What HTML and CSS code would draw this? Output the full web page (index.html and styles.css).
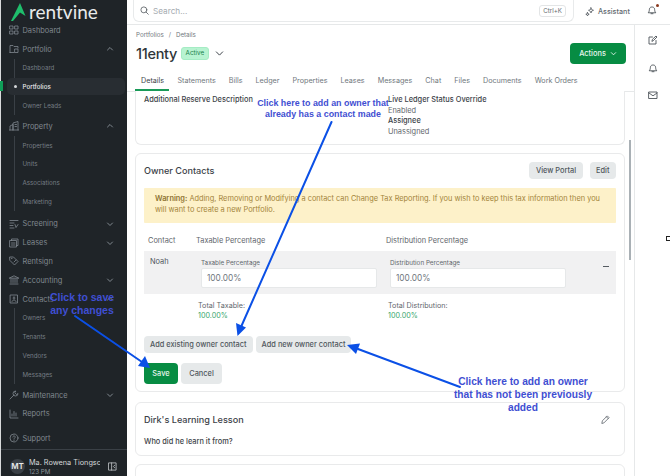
FILE: index.html
```html
<!DOCTYPE html>
<html lang="en">
<head>
    <meta charset="UTF-8">
    <title>Rentvine - 11enty</title>
    <link rel="stylesheet" href="styles.css">
</head>
<body>
    <!-- Sidebar -->
    <aside class="sidebar">
        <div class="logo">
            <svg class="logo-mark" viewBox="0 0 15 18"><path d="M9 0 14.500 13 9 9.500 2 18 0 18Z" fill="#1fbe6c"/></svg>
            <span>rentvine</span>
        </div>
        <nav class="side-nav">
            <a class="nav-item"><svg class="nav-icon" viewBox="0 0 10 10"><path d="M1 1h3v3H1zM6 1h3v3H6zM1 6h3v3H1zM6 6h3v3H6z"/></svg>Dashboard</a>
            <a class="nav-item"><svg class="nav-icon" viewBox="0 0 10 10"><path d="M1 8.500V1.500h3l1 1h4v1.500M1 8.500h4M6 5h3v3.500H6z"/></svg>Portfolio<svg class="chev" viewBox="0 0 8 8"><path d="M1.500 5 4 2.500 6.500 5"/></svg></a>
            <div class="sub-list">
                <a class="sub-item">Dashboard</a>
                <a class="sub-item active">Portfolios</a>
                <a class="sub-item">Owner Leads</a>
            </div>
            <a class="nav-item"><svg class="nav-icon" viewBox="0 0 10 10"><path d="M1 9V5l3-1.500V9M4 9V2l5-1.500V9M.5 9h9M6 3.500h1.500M6 5.500h1.500"/></svg>Property<svg class="chev" viewBox="0 0 8 8"><path d="M1.500 5 4 2.500 6.500 5"/></svg></a>
            <div class="sub-list sub-list-property">
                <a class="sub-item">Properties</a>
                <a class="sub-item">Units</a>
                <a class="sub-item">Associations</a>
                <a class="sub-item">Marketing</a>
            </div>
            <a class="nav-item"><svg class="nav-icon" viewBox="0 0 10 10"><path d="M1 1.500h8M1 4h4M1 6.500h3M1 9h4M6 5.500l1 3 2-3"/></svg>Screening<svg class="chev" viewBox="0 0 8 8"><path d="M1.500 3 4 5.500 6.500 3"/></svg></a>
            <a class="nav-item"><svg class="nav-icon" viewBox="0 0 10 10"><path d="M2.500 2.500V1h6.500v6.500H7.500M1 2.500h6.500V9H1zM2.500 5h3.500M2.500 7h3.500"/></svg>Leases<svg class="chev" viewBox="0 0 8 8"><path d="M1.500 3 4 5.500 6.500 3"/></svg></a>
            <a class="nav-item"><svg class="nav-icon" viewBox="0 0 10 10"><path d="M1 1h3.500L9 5.500 5.500 9 1 4.500zM2.500 2.500h.5M5 6l2-2"/></svg>Rentsign</a>
            <a class="nav-item"><svg class="nav-icon" viewBox="0 0 10 10"><path d="M.5 3 5 .8 9.500 3zM2 4v3.500M4 4v3.500M6 4v3.500M8 4v3.500M1 9h8"/></svg>Accounting<svg class="chev" viewBox="0 0 8 8"><path d="M1.500 3 4 5.500 6.500 3"/></svg></a>
            <a class="nav-item"><svg class="nav-icon" viewBox="0 0 10 10"><path d="M1.500 1h7v8h-7zM3 7.500c.3-2 3.700-2 4 0M5 3a1 1 0 1 0 .01 0"/></svg>Contacts<svg class="chev" viewBox="0 0 8 8"><path d="M1.500 5 4 2.500 6.500 5"/></svg></a>
            <div class="sub-list">
                <a class="sub-item">Owners</a>
                <a class="sub-item">Tenants</a>
                <a class="sub-item">Vendors</a>
                <a class="sub-item">Messages</a>
            </div>
            <a class="nav-item"><svg class="nav-icon" viewBox="0 0 10 10"><path d="M1 9l4-4M6.500 1a2.500 2.500 0 1 0 2.500 2.500L7.500 4.500 6 3z"/></svg>Maintenance<svg class="chev" viewBox="0 0 8 8"><path d="M1.500 3 4 5.500 6.500 3"/></svg></a>
            <a class="nav-item"><svg class="nav-icon" viewBox="0 0 10 10"><path d="M1 1v8h8M3 7V5M5 7V2.500M7 7V4"/></svg>Reports</a>
        </nav>
        <a class="nav-item support"><svg class="nav-icon" viewBox="0 0 10 10"><circle cx="5" cy="5" r="4"/><path d="M3.800 4c0-1.500 2.400-1.500 2.400 0 0 1-1.200 1-1.200 2M5 7.200v.3"/></svg>Support</a>
        <div class="user-box">
            <span class="avatar">MT</span>
            <div class="user-text">
                <div class="user-name">Ma. Rowena Tiongsc</div>
                <div class="user-sub">123 PM</div>
            </div>
            <svg class="collapse-icon" viewBox="0 0 10 10"><path d="M1 1h8v8H1zM4 1v8M7.500 3.500 6 5l1.500 1.500"/></svg>
        </div>
    </aside>

    <div class="main">
        <!-- Top bar -->
        <header class="topbar">
            <div class="search">
                <svg class="search-icon" viewBox="0 0 10 10"><circle cx="4.300" cy="4.300" r="3.300"/><path d="M6.800 6.800 9.200 9.200"/></svg>
                <span class="search-text">Search...</span>
                <span class="kbd">Ctrl+K</span>
            </div>
            <div class="assistant">
                <svg class="assistant-icon" viewBox="0 0 10 10"><path d="M6 .8l.7 1.800 1.800.7-1.800.7L6 6 5.300 4.300 3.500 3.300l1.800-.7zM2.500 5.500l.5 1.200 1.200.5L3 7.700 2.500 9 2 7.700.8 7.200 2 6.700z"/></svg>
                Assistant
            </div>
            <div class="top-bell">
                <svg class="rail-icon" viewBox="0 0 10 10"><path d="M1.500 7.500c1-1 .7-2.500 1-3.800C2.800 2.500 3.800 2 5 2s2.200.5 2.500 1.700c.3 1.300 0 2.800 1 3.800zM4 8.700h2"/></svg>
                <span class="bell-dot"></span>
            </div>
        </header>

        <div class="work">
            <div class="content">
                <!-- Page heading -->
                <div class="page-head">
                    <div class="crumbs"><span>Portfolios</span><i>/</i><span>Details</span></div>
                    <div class="title-row">
                        <h1 class="page-title">11enty</h1>
                        <span class="badge">Active</span>
                        <svg class="title-chev" viewBox="0 0 10 10"><path d="M1.500 3.200 5 6.800l3.500-3.600"/></svg>
                        <button class="btn btn-green btn-actions">Actions<svg class="btn-chev" viewBox="0 0 8 8"><path d="M1.500 3 4 5.500 6.500 3"/></svg></button>
                    </div>
                    <div class="tabs">
                        <a class="tab active">Details</a>
                        <a class="tab">Statements</a>
                        <a class="tab">Bills</a>
                        <a class="tab">Ledger</a>
                        <a class="tab">Properties</a>
                        <a class="tab">Leases</a>
                        <a class="tab">Messages</a>
                        <a class="tab">Chat</a>
                        <a class="tab">Files</a>
                        <a class="tab">Documents</a>
                        <a class="tab">Work Orders</a>
                    </div>
                </div>

                <!-- Cards -->
                <div class="cards">
                    <section class="card card-cut">
                        <div class="detail-col">
                            <div class="detail-label">Additional Reserve Description</div>
                        </div>
                        <div class="detail-col">
                            <div class="detail-label">Live Ledger Status Override</div>
                            <div class="detail-value">Enabled</div>
                            <div class="detail-label">Assignee</div>
                            <div class="detail-value">Unassigned</div>
                        </div>
                    </section>

                    <section class="card card-owners">
                        <div class="card-head">
                            <h2 class="card-title">Owner Contacts</h2>
                            <button class="btn btn-grey">View Portal</button>
                            <button class="btn btn-grey">Edit</button>
                        </div>
                        <div class="warning"><b>Warning:</b> Adding, Removing or Modifying a contact can Change Tax Reporting. If you wish to keep this tax information then you will want to create a new Portfolio.</div>
                        <div class="contact-grid grid-head">
                            <span>Contact</span>
                            <span>Taxable Percentage</span>
                            <span>Distribution Percentage</span>
                        </div>
                        <div class="contact-grid contact-row">
                            <span class="contact-name">Noah</span>
                            <label class="field"><span>Taxable Percentage</span><input class="field-input" value="100.00%"></label>
                            <label class="field"><span>Distribution Percentage</span><input class="field-input" value="100.00%"></label>
                            <span class="minus"></span>
                        </div>
                        <div class="contact-grid totals">
                            <span></span>
                            <div>Total Taxable:<div class="total-num">100.00%</div></div>
                            <div>Total Distribution:<div class="total-num">100.00%</div></div>
                        </div>
                        <div class="add-row">
                            <button class="btn btn-grey btn-add">Add existing owner contact</button>
                            <button class="btn btn-grey btn-add">Add new owner contact</button>
                        </div>
                        <div class="save-row">
                            <button class="btn btn-green btn-save">Save</button>
                            <button class="btn btn-grey btn-save">Cancel</button>
                        </div>
                    </section>

                    <section class="card card-lesson">
                        <div class="lesson-head">
                            <h2 class="card-title">Dirk's Learning Lesson</h2>
                            <svg class="pencil" viewBox="0 0 10 10"><path d="M1 9l.5-2.500L7 1l2 2-5.500 5.500zM6 2l2 2"/></svg>
                        </div>
                        <div class="detail-label">Who did he learn it from?</div>
                    </section>

                    <section class="card card-last"></section>
                </div>
                <div class="scroll-thumb"></div>
            </div>

            <!-- Right rail -->
            <div class="rail">
                <svg class="rail-icon" viewBox="0 0 10 10"><path d="M8 5.500V9H1V2h3.500M4 6l.4-1.600L8 1l1 1-3.500 3.500z"/></svg>
                <svg class="rail-icon" viewBox="0 0 10 10"><path d="M1.500 7.500c1-1 .7-2.500 1-3.800C2.800 2.500 3.800 2 5 2s2.200.5 2.500 1.700c.3 1.300 0 2.800 1 3.800zM4 8.700h2"/></svg>
                <svg class="rail-icon" viewBox="0 0 10 10"><path d="M1 2h8v6.500H1zM1 3l4 2.800L9 3"/></svg>
            </div>
        </div>
    </div>

    <!-- Annotations drawn over the page -->
    <svg class="arrows" viewBox="0 0 670 476">
        <g stroke="#0b50e6" stroke-width="2" fill="#0b50e6">
            <path d="M331.500 122 241 327"/>
            <path d="M75 316 142 362"/>
            <path d="M460 387 358 349"/>
            <path stroke="none" d="M237.500 336 236 323 246 327.500Z"/>
            <path stroke="none" d="M150 368 138 366 145 356Z"/>
            <path stroke="none" d="M347 345 360 343.500 356 354Z"/>
        </g>
    </svg>
    <div class="note note-existing">Click here to add an owner that<br>already has a contact made</div>
    <div class="note note-save">Click to save<br>any changes</div>
    <div class="note note-new">Click here to add an owner<br>that has not been previously<br>added</div>
    <div class="stray"></div>
</body>
</html>
```

FILE: styles.css
```css
/* General */
* {
    box-sizing: border-box;
}
body {
    margin: 0;
    width: 670px;
    height: 476px;
    overflow: hidden;
    display: flex;
    position: relative;
    background-color: #fff;
    color: #3c4248;
    font-family: Inter, "Liberation Sans", sans-serif;
    font-size: 7.4px;
}
svg {
    fill: none;
    stroke-linecap: round;
    stroke-linejoin: round;
}
button {
    font-family: inherit;
}

/* Sidebar */
.sidebar {
    width: 127px;
    height: 476px;
    flex: none;
    background-color: #1f2428;
    border-left: 1px solid #d8dadb;
    display: flex;
    flex-direction: column;
    position: relative;
}
.sidebar::before {
    content: "";
    position: absolute;
    left: -1px;
    top: 81px;
    width: 3px;
    height: 10px;
    background-color: #0f9d58;
}
.logo {
    height: 21px;
    padding: 3px 0 0 10px;
    display: flex;
    align-items: center;
    color: #e8eaeb;
    font-family: Lato, sans-serif;
    font-size: 19px;
    line-height: 18px;
}
.logo-mark {
    width: 15px;
    height: 18px;
    margin-right: 3px;
}
.side-nav {
    display: flex;
    flex-direction: column;
}
.nav-item {
    height: 18.8px;
    padding: 0 7px 0 8px;
    display: flex;
    align-items: center;
    color: #80888f;
    font-size: 7.4px;
}
.nav-icon {
    width: 10px;
    height: 10px;
    margin-right: 3.500px;
    stroke: #80888f;
    stroke-width: 0.8;
}
.chev {
    width: 8px;
    height: 8px;
    margin-left: auto;
    margin-right: 6px;
    stroke: #80888f;
    stroke-width: 1;
}
.sub-list {
    display: flex;
    flex-direction: column;
    margin: 0 0 2px 13px;
    border-left: 1px solid #3a4046;
}
.sub-list-property {
    margin-bottom: 3.500px;
}
.sub-item {
    height: 18.8px;
    padding-left: 7.500px;
    display: flex;
    align-items: center;
    color: #767e85;
    font-size: 6.200px;
}
.sub-item.active {
    position: relative;
    isolation: isolate;
    color: #e8eaeb;
    font-weight: 500;
}
.sub-item.active::before {
    content: "";
    position: absolute;
    left: -8px;
    top: 1px;
    width: 118px;
    height: 17px;
    border-radius: 5px;
    background-color: #282d32;
    z-index: -1;
}
.sub-item.active::after {
    content: "";
    position: absolute;
    left: -1px;
    top: 8px;
    width: 3px;
    height: 3px;
    border-radius: 50%;
    background-color: #d5d8da;
}
.support {
    margin-top: 7px;
}
.user-box {
    margin-top: 3px;
    height: 27px;
    padding: 8px 0 0 9px;
    display: flex;
    border-top: 1px solid #3a4046;
}
.avatar {
    width: 15px;
    height: 15px;
    margin-top: 1px;
    flex: none;
    border-radius: 50%;
    background-color: #3a4046;
    color: #e8eaeb;
    font-size: 8px;
    font-weight: 600;
    line-height: 15px;
    text-align: center;
}
.user-text {
    width: 71px;
    margin-left: 4px;
    overflow: hidden;
    white-space: nowrap;
}
.user-name {
    color: #d5d8da;
    font-size: 7.300px;
    line-height: 10px;
}
.user-sub {
    color: #8d959c;
    font-size: 6.200px;
    line-height: 8px;
}
.collapse-icon {
    width: 9px;
    height: 9px;
    margin: 4px 0 0 8px;
    stroke: #c0c4c7;
    stroke-width: 0.9;
}

/* Top bar */
.main {
    flex: 1;
    min-width: 0;
    display: flex;
    flex-direction: column;
}
.topbar {
    height: 25px;
    flex: none;
    padding-left: 6px;
    display: flex;
    border-bottom: 1px solid #e6e8e9;
}
.search {
    width: 441px;
    height: 22px;
    padding: 0 7px 0 6px;
    display: flex;
    align-items: center;
    border: 1px solid #e8eaeb;
    border-top: none;
    border-radius: 0 0 6px 6px;
}
.search-icon {
    width: 9px;
    height: 9px;
    margin-right: 4px;
    stroke: #555b61;
    stroke-width: 0.9;
}
.search-text {
    color: #a5abb0;
    font-size: 8.200px;
}
.kbd {
    margin-left: auto;
    height: 12px;
    padding: 0 3px;
    border: 1px solid #e3e5e6;
    border-radius: 3px;
    color: #656c72;
    font-size: 6.200px;
    line-height: 10px;
}
.assistant {
    margin-left: 11px;
    height: 23px;
    display: flex;
    align-items: center;
    color: #636a70;
    font-size: 7.200px;
    font-weight: 500;
}
.assistant-icon {
    width: 10px;
    height: 10px;
    margin-right: 3px;
    stroke: #565c62;
    stroke-width: 0.8;
}
.top-bell {
    margin-left: 17px;
    height: 21px;
    padding-top: 5px;
    position: relative;
}
.bell-dot {
    position: absolute;
    right: -2px;
    top: 4px;
    width: 3px;
    height: 3px;
    border-radius: 50%;
    background-color: #8a3a1f;
}

/* Page heading and tabs */
.work {
    flex: 1;
    min-height: 0;
    display: flex;
}
.content {
    flex: 1;
    min-width: 0;
    position: relative;
    overflow: hidden;
    display: flex;
    flex-direction: column;
}
.page-head {
    height: 67px;
    flex: none;
    padding: 0 8px 0 0;
    border-bottom: 1px solid #e6e8e9;
}
.crumbs {
    height: 9px;
    margin: 5px 0 0 9px;
    display: flex;
    color: #71787e;
    font-size: 6.200px;
    line-height: 9px;
}
.crumbs i {
    margin: 0 5px;
    font-style: normal;
}
.title-row {
    height: 21px;
    margin-top: 4px;
    padding-left: 9px;
    display: flex;
    align-items: center;
}
.page-title {
    margin: 0;
    color: #2f353a;
    font-size: 14.500px;
    font-weight: 500;
    letter-spacing: -0.3px;
}
.badge {
    margin-left: 4px;
    height: 13px;
    padding: 0 3.500px;
    border: 1px solid #a5ecc4;
    border-radius: 3px;
    background-color: #b7f3d1;
    color: #17804a;
    font-size: 6.300px;
    line-height: 11px;
}
.title-chev {
    width: 9px;
    height: 9px;
    margin-left: 6px;
    stroke: #3c4248;
    stroke-width: 1.1;
}
.btn {
    border: none;
    border-radius: 4px;
    font-size: 7.400px;
    font-weight: 500;
}
.btn-green {
    background-color: #078c43;
    color: #e8f6ee;
}
.btn-grey {
    background-color: #e6e9ea;
    color: #50575d;
}
.btn-actions {
    margin-left: auto;
    width: 56px;
    height: 21px;
    display: flex;
    align-items: center;
    justify-content: center;
}
.btn-chev {
    width: 7px;
    height: 7px;
    margin-left: 4px;
    stroke: #e8f6ee;
    stroke-width: 1;
}
.tabs {
    height: 24px;
    margin-top: 3px;
    padding-left: 8px;
    display: flex;
}
.tab {
    padding: 9px 6.500px 0;
    color: #70777d;
    font-size: 7.200px;
    line-height: 10px;
    white-space: nowrap;
}
.tab.active {
    width: 34px;
    margin-right: 2px;
    padding-left: 6px;
    padding-right: 0;
    color: #3c4248;
    border-bottom: 2px solid #199a58;
}

/* Cards */
.cards {
    flex: 1;
    display: flex;
    flex-direction: column;
    gap: 8px;
    padding: 0 9px 0 8px;
}
.card {
    flex: none;
    border: 1px solid #e9eaeb;
    border-radius: 6px;
    background-color: #fff;
}
.card-cut {
    height: 54px;
    margin-top: -1px;
    padding: 4px 8px 0;
    display: flex;
    border-top: none;
    border-radius: 0 0 6px 6px;
}
.detail-col {
    flex: 0 0 244px;
}
.detail-label {
    color: #3c4248;
    font-size: 7.400px;
    font-weight: 500;
    line-height: 10.500px;
}
.detail-value {
    color: #5f666c;
    font-size: 7.400px;
    line-height: 10.500px;
}
.card-owners {
    height: 239px;
    padding: 0 8px;
}
.card-head {
    height: 32px;
    margin-bottom: 2px;
    display: flex;
    align-items: center;
    gap: 7px;
}
.card-title {
    margin: 0 auto 0 0;
    color: #3c4248;
    font-size: 9.100px;
    font-weight: 500;
}
.card-head .btn {
    height: 17px;
    padding: 0 6.500px;
}
.warning {
    height: 35px;
    padding: 6px 11px;
    border-radius: 1px;
    background-color: #fdf1c9;
    color: #a3843a;
    font-size: 7.400px;
    line-height: 10.700px;
}
.warning b {
    font-weight: 600;
    color: #8f7433;
}
.contact-grid {
    display: grid;
    grid-template-columns: 48px 190px 190px 1fr;
}
.grid-head {
    height: 28px;
    padding: 13px 0 0 4px;
    color: #5f666c;
    font-size: 7.400px;
    line-height: 10px;
}
.contact-row {
    height: 43px;
    background-color: #f1f1f2;
    padding-left: 6px;
    grid-template-columns: 49px 189px 189px 1fr;
}
.contact-name {
    padding-top: 6px;
    font-size: 7.400px;
    color: #50575d;
}
.field {
    padding: 8px 0 0 2px;
    display: flex;
    flex-direction: column;
    color: #5f666c;
    font-size: 6.300px;
    line-height: 9px;
}
.field-input {
    width: 176px;
    height: 20px;
    margin-top: 0;
    padding: 0 5px;
    border: 1px solid #e6e8e9;
    border-radius: 2px;
    background-color: #fff;
    color: #71787e;
    font-family: inherit;
    font-size: 8.300px;
    outline: none;
}
.minus {
    width: 6px;
    height: 1px;
    margin: 15px 0 0 26px;
    background-color: #555b61;
}
.totals {
    height: 42px;
    padding-top: 7px;
    grid-template-columns: 54px 190px 190px 1fr;
    color: #5f666c;
    font-size: 7.200px;
    line-height: 10px;
}
.total-num {
    color: #37a76c;
}
.add-row {
    display: flex;
    gap: 3px;
}
.btn-add {
    height: 17px;
    padding: 0 6px;
}
.save-row {
    margin-top: 10px;
    display: flex;
    gap: 3px;
}
.btn-save {
    width: 34px;
    height: 21px;
}
.btn-save.btn-grey {
    width: 41px;
}
.card-lesson {
    height: 54px;
    margin-top: 2px;
    padding: 0 8px;
}
.lesson-head {
    height: 32px;
    margin-bottom: 2px;
    display: flex;
    align-items: center;
}
.pencil {
    width: 9px;
    height: 9px;
    margin-right: 6px;
    stroke: #6c7278;
    stroke-width: 1;
}
.card-last {
    height: 40px;
}
.scroll-thumb {
    position: absolute;
    right: 3px;
    top: 115px;
    width: 2px;
    height: 120px;
    background-color: #a9b0b5;
}

/* Right rail */
.rail {
    width: 36px;
    flex: none;
    padding-top: 10px;
    display: flex;
    flex-direction: column;
    align-items: center;
    gap: 17.500px;
    border-left: 1px solid #e6e8e9;
}
.rail-icon {
    width: 10px;
    height: 10px;
    display: block;
    stroke: #4d5359;
    stroke-width: 0.9;
}

/* Annotations */
.arrows {
    position: absolute;
    left: 0;
    top: 0;
    width: 670px;
    height: 476px;
}
.note {
    position: absolute;
    color: #3f4fd2;
    font-family: "Liberation Sans", Arial, sans-serif;
    font-size: 8.900px;
    font-weight: 700;
    text-align: center;
    white-space: nowrap;
}
.note-existing {
    left: 243px;
    top: 98px;
    width: 160px;
    line-height: 11px;
}
.note-save {
    left: 42px;
    top: 291px;
    width: 80px;
    font-size: 10.500px;
    line-height: 13px;
}
.note-new {
    left: 443px;
    top: 375px;
    width: 160px;
    font-size: 10.200px;
    line-height: 13px;
}
.stray {
    position: absolute;
    left: 666px;
    top: 236px;
    width: 4px;
    height: 5px;
    border: 1px solid #222;
    border-right: none;
}
```
